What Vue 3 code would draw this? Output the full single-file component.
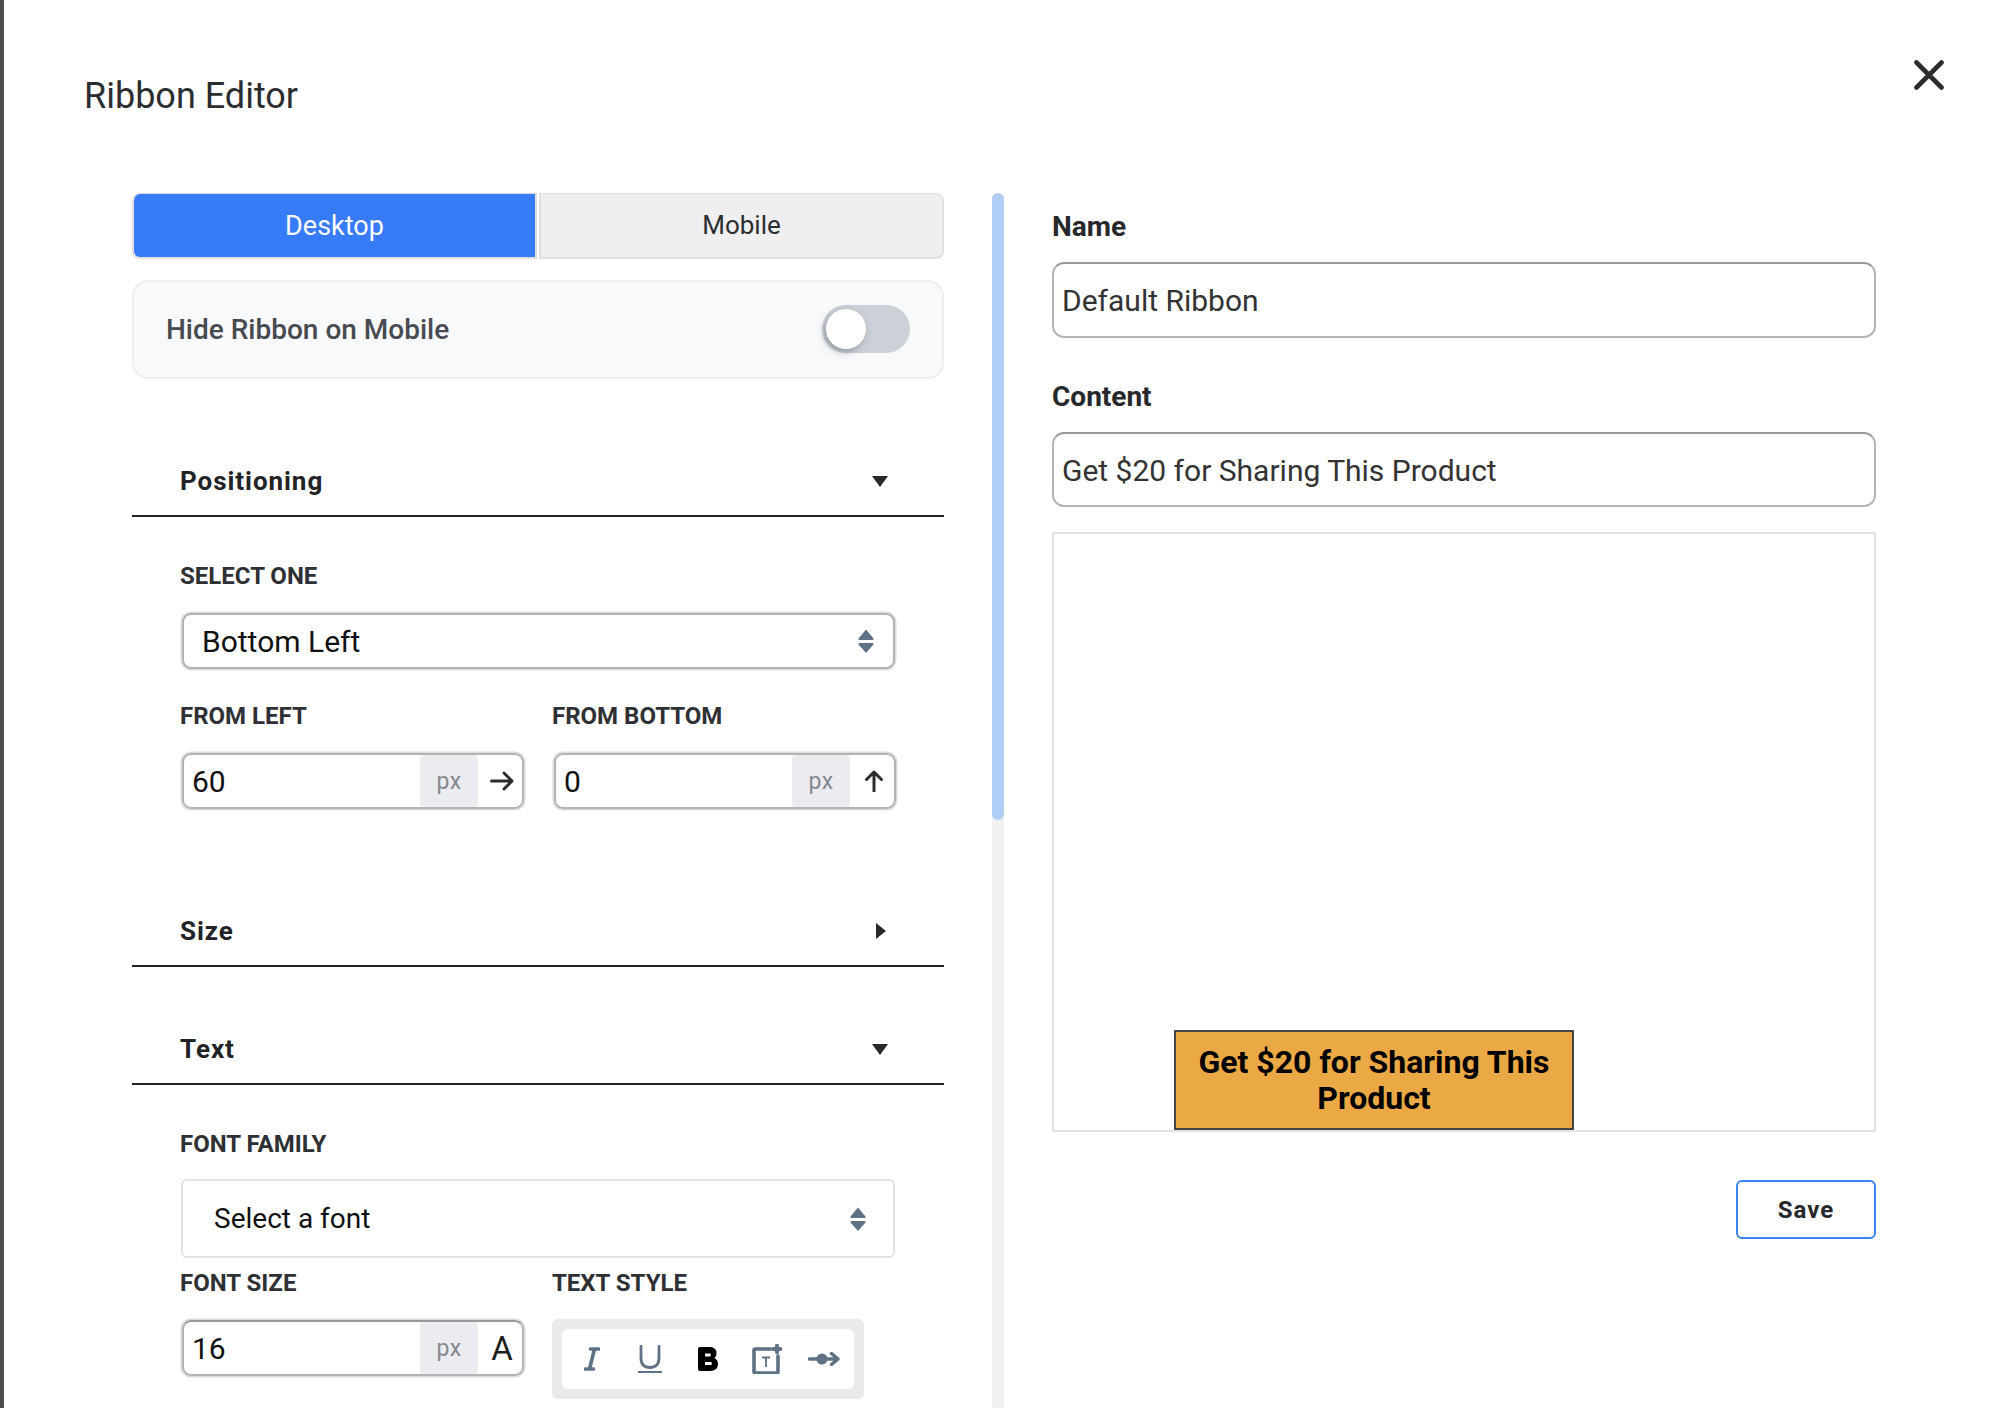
<script setup>
</script>

<template>
  <div class="page">
    <header class="head">
      <h1 class="title">Ribbon Editor</h1>
      <svg class="close" width="30" height="30" viewBox="0 0 30 30"><path d="M2.5 2.5 27.5 27.5M27.5 2.5 2.5 27.5" fill="none" stroke="#2a2c2f" stroke-width="4.6" stroke-linecap="round"/></svg>
    </header>
    <main class="body">
      <section class="left">
        <div class="tabs">
          <div class="tab on">Desktop</div>
          <div class="tab">Mobile</div>
        </div>
        <div class="hide">
          <span class="hidetext">Hide Ribbon on Mobile</span>
          <div class="toggle"><i class="knob"></i></div>
        </div>

        <div class="sec first">
          <span>Positioning</span>
          <svg width="16" height="11" viewBox="0 0 16 11"><path d="M0 0H16L8 11Z" fill="#26282c"/></svg>
        </div>
        <div class="secbody">
          <div class="lab top">SELECT ONE</div>
          <div class="select sel1">
            <span>Bottom Left</span>
            <svg width="16" height="24" viewBox="0 0 16 24"><path d="M8 0.5 15.5 9.5Q16 11 14.5 11H1.5Q0 11 .5 9.5ZM8 24 15.5 15.5Q16 14 14.5 14H1.5Q0 14 .5 15.5Z" fill="#5f7285"/></svg>
          </div>
          <div class="two mid">
            <div class="lab">FROM LEFT</div>
            <div class="lab">FROM BOTTOM</div>
          </div>
          <div class="two">
            <div class="num">
              <span class="val">60</span><span class="px">px</span>
              <span class="suf"><svg width="24" height="20" viewBox="0 0 24 20"><path d="M1.5 10H22M14 2l8 8-8 8" fill="none" stroke="#2a2c2f" stroke-width="3" stroke-linecap="round" stroke-linejoin="round"/></svg></span>
            </div>
            <div class="num">
              <span class="val">0</span><span class="px">px</span>
              <span class="suf"><svg width="20" height="22" viewBox="0 0 20 22"><path d="M10 21V2M2.5 9.500 10 2l7.500 7.500" fill="none" stroke="#2a2c2f" stroke-width="3" stroke-linecap="round" stroke-linejoin="round"/></svg></span>
            </div>
          </div>
        </div>

        <div class="sec size">
          <span>Size</span>
          <svg class="tri-r" width="10" height="16" viewBox="0 0 10 16"><path d="M0 0 10 8 0 16Z" fill="#26282c"/></svg>
        </div>
        <div class="sec text">
          <span>Text</span>
          <svg width="16" height="11" viewBox="0 0 16 11"><path d="M0 0H16L8 11Z" fill="#26282c"/></svg>
        </div>
        <div class="secbody">
          <div class="lab top">FONT FAMILY</div>
          <div class="select sel2">
            <span>Select a font</span>
            <svg width="16" height="24" viewBox="0 0 16 24"><path d="M8 0.5 15.5 9.5Q16 11 14.5 11H1.5Q0 11 .5 9.5ZM8 24 15.5 15.5Q16 14 14.5 14H1.5Q0 14 .5 15.5Z" fill="#5f7285"/></svg>
          </div>
          <div class="two low">
            <div class="lab">FONT SIZE</div>
            <div class="lab">TEXT STYLE</div>
          </div>
          <div class="two">
            <div class="num dark">
              <span class="val">16</span><span class="px">px</span>
              <span class="suf a">A</span>
            </div>
            <div class="tools">
              <div class="toolin">
                <svg width="16" height="24" viewBox="0 0 16 24"><path d="M6.500 2H14.500M1.500 22H9.500M10.500 2 5.500 22" fill="none" stroke="#5f7285" stroke-width="3.600" stroke-linecap="round"/></svg>
                <svg class="g38" width="24" height="28" viewBox="0 0 24 28"><path d="M3 1.500V13Q3 22.500 12 22.500T21 13V1.500" fill="none" stroke="#5f7285" stroke-width="2.800" stroke-linecap="round"/><path d="M0 27H24" stroke="#5f7285" stroke-width="2"/></svg>
                <svg class="g36" width="20" height="24" viewBox="0 0 20 24"><path fill-rule="evenodd" d="M2 0H12Q18.500 0 18.500 6.500 18.500 9.500 16.500 11 20 13 20 17 20 24 12 24H2Q0 24 0 22V2Q0 0 2 0ZM7 6.500V9.500H12.500Q13 8 12.500 6.500ZM7 15V18H13.500Q14 16.500 13.500 15Z" fill="#000"/></svg>
                <svg class="g34" width="30" height="30" viewBox="0 0 30 30"><path d="M19 5H3.500Q2 5 2 6.500V27.500Q2 29 3.500 29H24.500Q26 29 26 27.500V12" fill="none" stroke="#5f7285" stroke-width="3.600" stroke-linecap="round"/><path d="M10 13.500H18M14 13.500V23" fill="none" stroke="#5f7285" stroke-width="1.800"/><path d="M25 1.500V8.500M21.500 5H28.500" fill="none" stroke="#5f7285" stroke-width="3.800" stroke-linecap="round"/></svg>
                <svg class="g26" width="32" height="14" viewBox="0 0 32 14"><path d="M1.500 7H29M23.500 1.500 30 7l-6.500 5.500" fill="none" stroke="#5f7285" stroke-width="3.400" stroke-linecap="round" stroke-linejoin="round"/><circle cx="14" cy="7" r="5.500" fill="#5f7285"/></svg>
              </div>
            </div>
          </div>
        </div>
      </section>

      <div class="track"><div class="thumb"></div></div>

      <section class="right">
        <div class="rlab">Name</div>
        <div class="field f1">Default Ribbon</div>
        <div class="rlab second">Content</div>
        <div class="field">Get $20 for Sharing This Product</div>
        <div class="preview">
          <div class="ribbon">Get $20 for Sharing This Product</div>
        </div>
        <div class="actions"><div class="save">Save</div></div>
      </section>
    </main>
  </div>
</template>

<style>
html, body { margin: 0; background: #fff; overflow: hidden; }
</style>

<style scoped>
.page { box-sizing: border-box; width: 1990px; height: 1408px; overflow: hidden; border-left: 4px solid #4a4c4e; background: #fff; font-family: Roboto, "Liberation Sans", sans-serif; color: #212326; }
.head { display: flex; justify-content: space-between; align-items: flex-start; height: 193px; padding: 0 46px 0 80px; box-sizing: border-box; }
.title { margin: 74px 0 0; font-size: 36px; line-height: 44px; font-weight: 400; color: #2b2d30; }
.close { margin-top: 60px; }
.body { display: flex; align-items: stretch; height: 1215px; padding-left: 128px; overflow: hidden; }
.left { width: 812px; flex: none; }
.tabs { display: flex; gap: 2px; height: 66px; }
.tab { flex: 1; box-sizing: border-box; display: flex; align-items: center; justify-content: center; padding-bottom: 2px; background: #efefef; border: solid #dfdfdf; border-width: 1px 2px 2px; border-radius: 0 8px 8px 0; font-size: 26px; color: #2b2d30; }
.tab.on { padding-bottom: 0; background: #377bf8; color: #fff; border-radius: 8px 0 0 8px; font-size: 27px; }
.hide { box-sizing: border-box; margin-top: 21px; height: 99px; display: flex; align-items: center; justify-content: space-between; padding: 0 32px; background: #f8f9fb; border: 2px solid #eceef1; border-radius: 16px; font-size: 28px; font-weight: 500; color: #474a4f; }
.hidetext { margin-top: -1px; }
.toggle { position: relative; width: 88px; height: 48px; margin-top: -1px; border-radius: 24px; background: #cbd1d7; }
.knob { position: absolute; left: 4px; top: 4px; width: 40px; height: 40px; border-radius: 50%; background: #fff; box-shadow: -2px 3px 7px rgba(60, 70, 80, .4); }
.sec { box-sizing: border-box; display: flex; align-items: flex-start; justify-content: space-between; height: 52px; padding: 0 56px 0 48px; border-bottom: 2px solid #212326; font-size: 26px; line-height: 32px; font-weight: 700; letter-spacing: .95px; }
.sec svg { margin-top: 11px; }
.sec .tri-r { margin: 8px 2px 0 0; }
.sec.first { margin-top: 86px; }
.sec.size { margin-top: 105px; }
.sec.text { margin-top: 66px; }
.secbody { padding: 0 49px 0 48px; }
.lab { font-size: 24px; line-height: 28px; font-weight: 700; color: #2e3034; }
.lab.top { margin-top: 45px; }
.select { box-sizing: border-box; display: flex; align-items: center; justify-content: space-between; color: #111; background: #fff; }
.sel1 { width: 713px; height: 56px; margin: 23px 0 1px 2px; padding: 0 19px 0 18px; border: 2px solid #b3b3b3; border-radius: 9px; box-shadow: 0 0 0 1.5px #dcdcdc; font-size: 30px; }
.sel2 { width: 714px; height: 79px; margin: 21px 0 0 1px; padding: 0 27px 0 31px; border: 2px solid #e3e3e3; border-radius: 6px; font-size: 28px; }
.two { display: grid; grid-template-columns: 372px 344px; }
.two.mid { margin-top: 33px; margin-bottom: 22px; }
.two.low { margin-top: 11px; margin-bottom: 22px; }
.num { box-sizing: border-box; display: flex; align-items: center; width: 342px; height: 56px; margin: 1px 0 1px 2px; border: 2px solid #b3b3b3; border-radius: 9px; box-shadow: 0 0 0 1.5px #dcdcdc; font-size: 30px; color: #111; overflow: hidden; }
.num.dark { border-top-color: #999; }
.val { flex: 1; padding-left: 8px; }
.px { align-self: stretch; width: 58px; flex: none; display: flex; align-items: center; justify-content: center; background: #ebecf0; color: #84878e; font-size: 23px; letter-spacing: .5px; border-radius: 4px; }
.suf { box-sizing: border-box; width: 44px; padding-left: 4px; flex: none; display: flex; align-items: center; justify-content: center; }
.a { font-size: 33px; color: #1c1d20; }
.tools { box-sizing: border-box; width: 312px; height: 80px; padding: 10px; background: #e9e9e9; border-radius: 6px; }
.toolin { box-sizing: border-box; height: 60px; display: flex; align-items: center; padding: 0 0 0 22px; background: #fff; border-radius: 6px; }
.g38 { margin-left: 38px; }
.g36 { margin-left: 36px; }
.g34 { margin-left: 34px; }
.g26 { margin-left: 26px; }
.track { width: 12px; flex: none; margin-left: 48px; background: #f1f1f1; border-radius: 6px 6px 0 0; }
.thumb { height: 627px; background: #b0cdf5; border-radius: 6px; }
.right { width: 824px; flex: none; margin-left: 48px; }
.rlab { margin-top: 18px; font-size: 28px; line-height: 32px; font-weight: 700; color: #26282c; }
.rlab.second { margin-top: 43px; }
.field { box-sizing: border-box; margin-top: 19px; height: 75px; display: flex; align-items: center; padding: 2px 0 0 8px; border: 2px solid #b5b5b5; border-top-color: #999; border-radius: 12px; font-size: 30px; color: #333; }
.field.f1 { height: 76px; padding-top: 0; }
.preview { box-sizing: border-box; display: flex; align-items: flex-end; height: 600px; margin-top: 25px; padding-left: 120px; border: 2px solid #e2e2e2; }
.ribbon { box-sizing: border-box; width: 400px; height: 100px; display: flex; align-items: center; justify-content: center; text-align: center; background: #eaa945; border: 2px solid #444; font-size: 32px; line-height: 36px; font-weight: 700; color: #000; }
.actions { display: flex; justify-content: flex-end; margin-top: 48px; }
.save { box-sizing: border-box; width: 140px; height: 59px; display: flex; align-items: center; justify-content: center; border: 2px solid #3b82f6; border-radius: 6px; font-size: 24px; font-weight: 700; letter-spacing: 1px; color: #26282c; }
</style>
